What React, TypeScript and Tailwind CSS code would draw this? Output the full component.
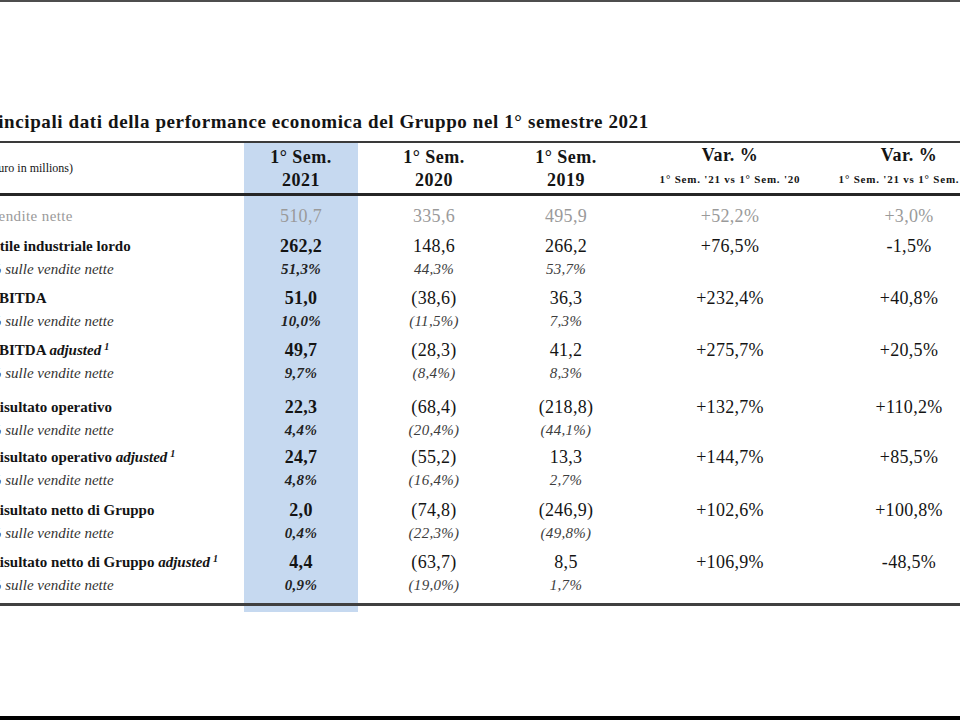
type Row = {
  label: string;
  adjusted?: boolean;
  muted?: boolean;
  values: string[];
  pct?: string[];
  pad: string;
};

const rows: Row[] = [
  { label: "Vendite nette", muted: true, values: ["510,7", "335,6", "495,9", "+52,2%", "+3,0%"], pad: "pt-[9px]" },
  { label: "Utile industriale lordo", values: ["262,2", "148,6", "266,2", "+76,5%", "-1,5%"], pct: ["51,3%", "44,3%", "53,7%"], pad: "pt-[7px]" },
  { label: "EBITDA", values: ["51,0", "(38,6)", "36,3", "+232,4%", "+40,8%"], pct: ["10,0%", "(11,5%)", "7,3%"], pad: "pt-[6px]" },
  { label: "EBITDA", adjusted: true, values: ["49,7", "(28,3)", "41,2", "+275,7%", "+20,5%"], pct: ["9,7%", "(8,4%)", "8,3%"], pad: "pt-[6px]" },
  { label: "Risultato operativo", values: ["22,3", "(68,4)", "(218,8)", "+132,7%", "+110,2%"], pct: ["4,4%", "(20,4%)", "(44,1%)"], pad: "pt-[11px]" },
  { label: "Risultato operativo", adjusted: true, values: ["24,7", "(55,2)", "13,3", "+144,7%", "+85,5%"], pct: ["4,8%", "(16,4%)", "2,7%"], pad: "pt-[4px]" },
  { label: "Risultato netto di Gruppo", values: ["2,0", "(74,8)", "(246,9)", "+102,6%", "+100,8%"], pct: ["0,4%", "(22,3%)", "(49,8%)"], pad: "pt-[7px]" },
  { label: "Risultato netto di Gruppo", adjusted: true, values: ["4,4", "(63,7)", "8,5", "+106,9%", "-48,5%"], pct: ["0,9%", "(19,0%)", "1,7%"], pad: "pt-[6px] pb-[6px]" },
];

const cols = "grid grid-cols-[255px_114px_152px_112px_216px_142px]";
const blue = "bg-[#c6d9f0]";

export default function App() {
  return (
    <div className="w-[960px] h-[720px] overflow-hidden bg-white border-t-2 border-t-[#4d4d4d] border-b-4 border-b-black font-['Liberation_Serif',serif] text-[#141414] pt-[108px]">
      <h1 className="ml-[-23px] h-[24px] leading-[24px] text-[19px] font-bold tracking-[0.6px] whitespace-nowrap">
        Principali dati della performance economica del Gruppo nel 1° semestre 2021
      </h1>

      <div className="mt-[7px] ml-[-11px] w-[991px]">
        {/* header */}
        <div className={`${cols} border-t-2 border-t-[#3a3a3a] border-b-[3px] border-b-[#262626]`}>
          <div className="h-[50px] flex items-center text-[12px] whitespace-nowrap">(euro in millions)</div>
          <HeadCell top="1° Sem." bottom="2021" className={blue} />
          <HeadCell top="1° Sem." bottom="2020" />
          <HeadCell top="1° Sem." bottom="2019" />
          <VarCell sub="1° Sem. '21 vs 1° Sem. '20" />
          <VarCell sub="1° Sem. '21 vs 1° Sem. '19" />
        </div>

        {/* body */}
        <div className="border-b-[3px] border-b-[#404040]">
          {rows.map((row, i) => (
            <div key={i} className={cols}>
              <div className={`${row.pad} whitespace-nowrap text-[15px]`}>
                <div className={`h-[23px] leading-[23px] ${row.muted ? "text-[#9a9a9a] tracking-[0.4px]" : "font-bold"}`}>
                  {row.label}
                  {row.adjusted && (
                    <>
                      {" "}
                      <span className="italic">adjusted</span>
                      <sup className="italic text-[10px] ml-[3px]">1</sup>
                    </>
                  )}
                </div>
                {row.pct && <div className="h-[23px] leading-[23px] italic text-[#333]">% sulle vendite nette</div>}
              </div>
              {row.values.map((v, j) => (
                <div key={j} className={`${row.pad} text-center ${j === 0 ? blue : ""}`}>
                  <div
                    className={`h-[23px] leading-[23px] text-[18px] tracking-[0.3px] ${
                      row.muted ? "text-[#9a9a9a]" : j === 0 ? "font-bold" : ""
                    }`}
                  >
                    {v}
                  </div>
                  {row.pct && j < 3 && (
                    <div
                      className={`h-[23px] leading-[23px] text-[15px] italic tracking-[0.3px] ${
                        j === 0 ? "font-bold text-[#222]" : "text-[#3d3d3d]"
                      }`}
                    >
                      {row.pct[j]}
                    </div>
                  )}
                </div>
              ))}
            </div>
          ))}
        </div>

        {/* blue column runs a little past the bottom rule */}
        <div className={cols}>
          <div />
          <div className={`h-[6px] ${blue}`} />
        </div>
      </div>
    </div>
  );
}

function HeadCell({ top, bottom, className = "" }: { top: string; bottom: string; className?: string }) {
  return (
    <div className={`pt-[3px] pb-[1px] text-center font-bold text-[18px] tracking-[0.5px] ${className}`}>
      <div className="h-[23px] leading-[23px]">{top}</div>
      <div className="h-[23px] leading-[23px]">{bottom}</div>
    </div>
  );
}

function VarCell({ sub }: { sub: string }) {
  return (
    <div className="pt-[1px] text-center whitespace-nowrap">
      <div className="h-[23px] leading-[23px] font-bold text-[18px] tracking-[0.5px]">Var. %</div>
      <div className="h-[25px] leading-[25px] font-bold text-[11px] tracking-[0.8px]">{sub}</div>
    </div>
  );
}
